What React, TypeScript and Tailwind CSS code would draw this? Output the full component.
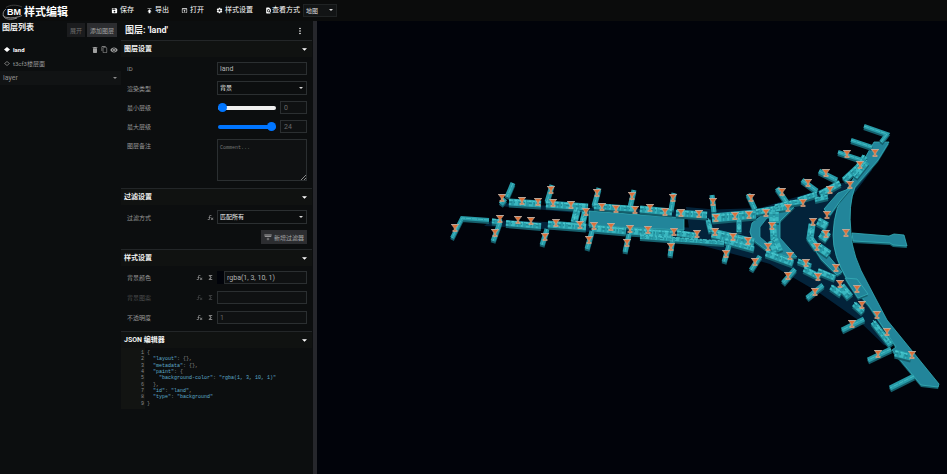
import type { ReactNode } from 'react';
import {
  MdContentCopy,
  MdDelete,
  MdFileDownload,
  MdFindInPage,
  MdFunctions,
  MdMoreVert,
  MdOpenInBrowser,
  MdSave,
  MdSettings,
  MdVisibility,
} from 'react-icons/md';

const inputClass =
  'block w-full min-w-0 rounded-none border border-[#2b2f31] bg-[#0f1112] px-[2px] text-[7px] text-[#b4b4b4] outline-none h-[13px]';

function Caret({ className = 'h-[3px] w-[5px]' }: { className?: string }) {
  return (
    <svg viewBox="0 0 6 3" className={className} fill="currentColor" aria-hidden="true">
      <path d="M0 0h6L3 3z" />
    </svg>
  );
}

function Select({ id, options }: { id: string; options: string[] }) {
  return (
    <div className="relative min-w-0 flex-1">
      <select
        id={id}
        className="block h-[14px] w-full appearance-none border border-[#2b2f31] bg-[#0c0e0f] px-[2px] text-[6px] leading-[12px] text-[#f0f0f0] outline-none"
      >
        {options.map((o) => (
          <option key={o}>{o}</option>
        ))}
      </select>
      <Caret className="pointer-events-none absolute top-[6px] right-[4px] h-[2px] w-[4px] text-[#d8d8d8]" />
    </div>
  );
}

function Section({ title, children }: { title: string; children: ReactNode }) {
  return (
    <section className="border-t border-[#232628]">
      <button type="button" className="flex h-4 w-full items-center justify-between bg-[#101211] pr-[5px] pl-[3px]">
        <span className="text-[7px] font-bold text-[#f2f2f2]">{title}</span>
        <Caret className="h-[3px] w-[5px] text-white" />
      </button>
      {children}
    </section>
  );
}

function Field({
  label,
  htmlFor,
  dim,
  tools,
  top,
  children,
}: {
  label: string;
  htmlFor: string;
  dim?: boolean;
  tools?: ReactNode;
  top?: boolean;
  children: ReactNode;
}) {
  return (
    <div className={`flex pr-[5px] pl-[6px] ${top ? 'items-start' : 'items-center'}`}>
      <label
        htmlFor={htmlFor}
        className={`flex-1 text-[6px] ${top ? 'leading-[13px]' : ''} ${dim ? 'text-[#4a4c4d]' : 'text-[#979797]'}`}
      >
        {label}
      </label>
      <div className={`flex gap-1 pr-[3px] ${dim ? 'text-[#4a4c4d]' : 'text-[#a8a8a8]'}`}>{tools}</div>
      <div className="flex w-[90px] items-center">{children}</div>
    </div>
  );
}

function FxButton() {
  return (
    <button type="button" aria-label="函数" className="flex items-center">
      <svg viewBox="0 0 24 24" className="size-[7px]" fill="currentColor" aria-hidden="true">
        <path d="M12.42 5.29c-1.1-.1-2.07.71-2.17 1.82L10 10h2.82v2h-3l-.44 5.07A4.001 4.001 0 0 1 2 18.83l1.5-1.5c.33 1.05 1.46 1.64 2.5 1.3.78-.24 1.33-.93 1.4-1.74L7.82 12h-3v-2H8l.27-3.07a4.01 4.01 0 0 1 4.33-3.65c1.26.11 2.4.81 3.06 1.89l-1.5 1.5c-.25-.77-.93-1.31-1.74-1.38M22 13.65l-1.41-1.41-2.83 2.83-2.83-2.83-1.43 1.41 2.85 2.85-2.85 2.81 1.43 1.41 2.83-2.83 2.83 2.83L22 19.31l-2.83-2.81z" />
      </svg>
    </button>
  );
}

function FieldTools() {
  return (
    <>
      <FxButton />
      <button type="button" aria-label="表达式" className="flex items-center">
        <MdFunctions size={7} />
      </button>
    </>
  );
}

function ZoomRange({ id, value, label }: { id: string; value: number; label: string }) {
  return (
    <>
      <input
        type="range"
        id={id}
        min={0}
        max={24}
        defaultValue={value}
        className={`ml-px h-1 w-[58px] appearance-none rounded-full [&::-webkit-slider-thumb]:size-[9px] [&::-webkit-slider-thumb]:appearance-none [&::-webkit-slider-thumb]:rounded-full [&::-webkit-slider-thumb]:bg-[#0075ff] ${
          value > 0 ? 'bg-[#0075ff]' : 'bg-[#efefef]'
        }`}
      />
      <input
        type="text"
        aria-label={label}
        placeholder={String(value)}
        className="ml-1 h-[13px] w-[27px] rounded-none border border-[#2b2f31] bg-[#0f1112] px-[3px] text-[7px] outline-none placeholder:text-[#6a6a6a]"
      />
    </>
  );
}

const headerActions = [
  { icon: <MdSave size={7} />, text: '保存' },
  { icon: <MdFileDownload size={7} className="rotate-180" />, text: '导出' },
  { icon: <MdOpenInBrowser size={7} />, text: '打开' },
  { icon: <MdSettings size={7} />, text: '样式设置' },
];

function Header() {
  return (
    <header className="flex h-[21px] shrink-0 items-center bg-[#0b0c0c] text-white">
      <div className="flex w-[111px] items-center pt-[3px]">
        <svg viewBox="0 0 24 18" className="h-[18px] w-[24px]" aria-hidden="true">
          <path d="M6 6C2 9 2 14 7 14.500C12 15.500 17 14.500 22 12.500M3 12C4 17 12 17 17 15" fill="none" stroke="#8f8f8f" strokeWidth="0.900" />
          <path d="M6 4.500C10 1.500 17 1.500 22 4" fill="none" stroke="#555" strokeWidth="0.700" />
          <text x="7" y="12" fontSize="9" fontWeight="700" fill="#fff" fontFamily="Liberation Sans, sans-serif">
            BM
          </text>
        </svg>
        <h1 className="text-[11px] leading-none font-bold">样式编辑</h1>
      </div>
      <nav className="flex gap-3">
        {headerActions.map((a) => (
          <button key={a.text} type="button" className="flex items-center gap-[2px] text-[7px] whitespace-nowrap">
            {a.icon}
            {a.text}
          </button>
        ))}
        <div className="flex items-center text-[7px]">
          <MdFindInPage size={7} />
          <label htmlFor="view-mode" className="whitespace-nowrap">
            查看方式
          </label>
          <div className="relative ml-[3px] w-[34px]">
            <select id="view-mode" className="block h-[13px] w-full appearance-none border border-[#202324] bg-[#121415] pl-[2px] text-[6px] text-[#dedede] outline-none">
              <option>地图</option>
            </select>
            <Caret className="pointer-events-none absolute top-[5px] right-[4px] h-[2px] w-[4px] text-[#d8d8d8]" />
          </div>
        </div>
      </nav>
    </header>
  );
}

function LayerList() {
  return (
    <aside className="w-[121px] shrink-0 bg-[#0c0e0f]">
      <div className="flex h-[18px] items-center gap-[2px] pr-1 pl-[2px]">
        <h2 className="flex-1 self-start pt-[2px] text-[8px] leading-[10px] font-bold text-[#f2f2f2]">图层列表</h2>
        <button type="button" className="h-[14px] w-[18px] bg-[#1b1c1e] text-[6px] text-[#6c6c6c]">
          展开
        </button>
        <button type="button" className="h-[14px] w-[30px] bg-[#2c2d30] text-[6px] text-[#a4a4a4]">
          添加图层
        </button>
      </div>
      <ul className="pt-[3px] text-[6px]">
        <li className="flex h-[14px] items-center gap-[3px] pr-[3px] pl-1 text-white">
          <svg viewBox="0 0 6 5" className="h-[5px] w-[6px]" fill="currentColor" aria-hidden="true">
            <path d="M3 0l3 2.500-3 2.500L0 2.500z" />
          </svg>
          <span className="flex-1 font-bold">land</span>
          <span className="flex items-center gap-[2px] pt-px text-[#a0a0a0]">
            <button type="button" aria-label="删除">
              <MdDelete size={8} />
            </button>
            <button type="button" aria-label="复制">
              <MdContentCopy size={7} />
            </button>
            <button type="button" aria-label="显示">
              <MdVisibility size={8} />
            </button>
          </span>
        </li>
        <li className="flex h-[15px] items-center gap-[3px] pl-1 text-[#979797]">
          <svg viewBox="0 0 6 5" className="h-[5px] w-[6px]" fill="none" stroke="currentColor" strokeWidth="0.700" aria-hidden="true">
            <path d="M3 .5l2.500 2-2.500 2L.5 2.500z" />
          </svg>
          <span>t3cf3楼层面</span>
        </li>
        <li>
          <button type="button" className="flex h-[14px] w-full items-center justify-between bg-[#111314] pr-1 pl-[3px] text-[7px] text-[#8e8e8e]">
            layer
            <Caret className="h-[2px] w-[4px]" />
          </button>
        </li>
      </ul>
    </aside>
  );
}

const jsonLines: [string, string, string][] = [
  ['{', '', ''],
  ['  ', '"layout"', ': {},'],
  ['  ', '"metadata"', ': {},'],
  ['  ', '"paint"', ': {'],
  ['    ', '"background-color"', ': "rgba(1, 3, 10, 1)"'],
  ['  },', '', ''],
  ['  ', '"id"', ': "land",'],
  ['  ', '"type"', ': "background"'],
  ['}', '', ''],
];

function JsonEditor() {
  return (
    <div className="grid h-[61px] auto-rows-fr bg-[linear-gradient(to_right,#121412_24px,transparent_24px)] pt-[2px] pb-[2px] font-['Liberation_Mono',monospace] text-[5px] leading-[6px]">
      {jsonLines.map(([lead, key, rest], i) => (
        <div key={i} className="flex">
          <span className="w-[23px] shrink-0 text-right text-[#8a8a8a]">{i + 1}</span>
          <code className="pl-[3px] font-['Liberation_Mono',monospace] whitespace-pre text-[#8a8a8a]">
            {lead}
            <span className="text-[#5faccb]">{key}</span>
            {rest.split(/("[^"]*")/).map((part, n) => (
              <span key={n} className={part.startsWith('"') ? 'text-[#5faccb]' : ''}>
                {part}
              </span>
            ))}
          </code>
        </div>
      ))}
    </div>
  );
}

function LayerEditor() {
  return (
    <main className="w-[192px] shrink-0 bg-[#0c0e0f] pr-px">
      <div className="flex h-[19px] items-center justify-between pr-[7px] pl-1">
        <h2 className="text-[9px] font-bold text-[#f2f2f2]">图层: 'land'</h2>
        <button type="button" aria-label="更多" className="text-white">
          <MdMoreVert size={10} />
        </button>
      </div>

      <Section title="图层设置">
        <div className="flex flex-col gap-[6px] pt-[5px] pb-[7px]">
          <Field label="ID" htmlFor="layer-id">
            <input id="layer-id" className={inputClass} defaultValue="land" />
          </Field>
          <Field label="渲染类型" htmlFor="layer-type">
            <Select id="layer-type" options={['背景']} />
          </Field>
          <Field label="最小层级" htmlFor="min-zoom">
            <ZoomRange id="min-zoom" value={0} label="最小层级数值" />
          </Field>
          <Field label="最大层级" htmlFor="max-zoom">
            <ZoomRange id="max-zoom" value={24} label="最大层级数值" />
          </Field>
          <Field label="图层备注" htmlFor="comment" top>
            <div className="relative w-full">
              <textarea
                id="comment"
                placeholder="Comment..."
                className="block h-[42px] w-full resize-none rounded-none border border-[#2b2f31] bg-[#0f1112] px-[2px] py-[5px] font-['Liberation_Mono',monospace] text-[5px] outline-none placeholder:text-[#777]"
              />
              <svg viewBox="0 0 5 5" className="pointer-events-none absolute right-px bottom-px size-[5px]" stroke="#c0c0c0" strokeWidth="0.700" aria-hidden="true">
                <path d="M0 5l5-5M3 5l2-2" />
              </svg>
            </div>
          </Field>
        </div>
      </Section>

      <Section title="过滤设置">
        <div className="flex flex-col gap-[6px] pt-[5px] pb-[5px]">
          <Field label="过滤方式" htmlFor="filter-mode" tools={<FxButton />}>
            <Select id="filter-mode" options={['匹配所有']} />
          </Field>
          <div className="flex justify-end pr-[5px]">
            <button type="button" className="flex h-[14px] w-[46px] items-center justify-center gap-[2px] bg-[#2c2d30] text-[6px] whitespace-nowrap text-[#a8a8a8]">
              <svg viewBox="0 0 24 24" className="size-[8px]" fill="currentColor" aria-hidden="true">
                <path d="M22 10a2 2 0 0 1-2 2H4a2 2 0 0 1-2-2V3h2v2h4V3h2v2h4V3h2v2h4V3h2zM4 10h4V7H4zm6 0h4V7h-4zm10 0V7h-4v3zm-9 4h2v3h3v2h-3v3h-2v-3H8v-2h3z" />
              </svg>
              新增过滤器
            </button>
          </div>
        </div>
      </Section>

      <Section title="样式设置">
        <div className="flex flex-col gap-[7px] pt-[5px] pb-[7px]">
          <Field label="背景颜色" htmlFor="bg-color" tools={<FieldTools />}>
            <span className="h-[13px] w-[7px] shrink-0 bg-[#01030a]" />
            <input id="bg-color" className={inputClass} defaultValue="rgba(1, 3, 10, 1)" />
          </Field>
          <Field label="背景图案" htmlFor="bg-pattern" dim tools={<FieldTools />}>
            <input id="bg-pattern" className={inputClass} />
          </Field>
          <Field label="不透明度" htmlFor="bg-opacity" tools={<FieldTools />}>
            <input id="bg-opacity" className={`${inputClass} placeholder:text-[#6a6a6a]`} placeholder="1" />
          </Field>
        </div>
      </Section>

      <Section title="JSON 编辑器">
        <JsonEditor />
      </Section>
    </main>
  );
}

// Ground slabs under the building parts
const floors = [
  'M500 203L590 208L700 210L760 208L852 180L866 160L872 170L838 215L838 255L868 300L892 347L884 345L858 320L818 292L770 264L700 245L640 236L590 232L560 230L484 226L492 220L700 228L700 220L590 214L500 206Z',
  'M686 207L742 212L764 221L764 246L740 243L690 236Z',
  'M777 232L781 214L812 202L838 194L822 209L808 224L806 240L814 250L842 280L835 277L802 262Z',
];

// Rows of rooms along the piers, with the width of each row
const rooms: [string, number][] = [
  ['M501 200L505 203', 7],
  ['M509 202L541 204', 7],
  ['M546 204L588 207', 7],
  ['M594 206L636 209', 6],
  ['M640 209L672 212', 7],
  ['M676 213L707 215', 7],
  ['M712 218L756 214', 9],
  ['M492 221L502 222', 5],
  ['M506 223L541 226', 6],
  ['M548 224L586 227', 7],
  ['M592 228L626 231', 7],
  ['M629 231L673 234', 7],
  ['M677 233L698 236', 6],
  ['M640 237L724 243', 4],
  ['M712 233L754 243', 9],
  ['M577 210L574 222', 7],
  ['M585 212L582 224', 6],
  ['M708 220L711 232', 5],
  ['M739 220L739 232', 5],
  ['M725 241L754 249', 5],
  ['M756 212L786 207', 6],
  ['M775 207L791 203L804 201', 5],
  ['M798 200L817 194', 5],
  ['M815 200L828 197', 4],
  ['M820 194L840 183', 6],
  ['M844 180L858 167L865 156', 6],
  ['M855 177L867 162', 6],
  ['M774 212L774 223', 10],
  ['M773 240L778 252', 11],
  ['M773 224L774 240', 7],
  ['M766 253L793 263', 7],
  ['M798 261L811 266', 5],
  ['M804 269L820 277', 6],
  ['M818 271L835 278', 6],
  ['M831 287L841 294', 6],
  ['M841 286L850 297', 8],
  ['M854 304L863 312', 6],
  ['M873 322L891 345', 6],
  ['M812 224L810 238L817 248', 7],
  ['M818 221L827 226', 8],
  ['M821 233L828 238', 10],
  ['M819 247L829 254', 8],
  ['M895 353L911 357', 7],
];

// Boarding bridges
const bridges: [string, number][] = [
  ['M513 183L507 197', 5],
  ['M552 185L547 202', 5],
  ['M599 188L594 206', 5],
  ['M634 190L630 207', 5],
  ['M674 193L671 210', 5],
  ['M712 195L714 212', 5],
  ['M748 194L755 209', 5],
  ['M777 188L788 204', 5],
  ['M802 180L817 191', 5],
  ['M819 171L837 180', 5],
  ['M838 152L862 160', 4],
  ['M851 140L872 147', 4],
  ['M864 126L887 134L881 142', 4],
  ['M489 220L462 218L452 238', 4],
  ['M500 222L493 241', 5],
  ['M547 229L542 245', 5],
  ['M592 231L587 249', 5],
  ['M629 234L625 252', 5],
  ['M673 237L670 256', 5],
  ['M729 245L724 262', 5],
  ['M760 256L751 270', 5],
  ['M795 269L783 283', 5],
  ['M823 285L807 298', 5],
  ['M864 319L842 330', 5],
  ['M891 349L868 360', 5],
  ['M914 376L890 388', 5],
];

const slabs = [
  'M589 211L684 218L684 230L589 226Z',
  'M874 142L889 142L878 160L855 187Q848 205 851 233Q852 256 868 284L887 320L939 384L938 387L921 385L892 350L896 347L869 306L847 279Q833 256 833 235Q834 205 848 188Z',
  'M852 233L889 236L894 234L904 235L907 246L893 245L890 243L853 241Z',
  'M766 212L788 206L795 206L780 221L780 238L797 257L788 257L765 249L753 240L750 232L752 223Z',
  'M845 278L857 279L868 294L858 298Z',
  'M824 209L838 193L851 188L840 201L830 215Z',
  'M809 240L818 246L827 254L842 272L837 275L821 259Z',
];

const gates: [number, number][] = [
  [502, 198], [522, 201], [538, 202], [553, 203], [571, 205], [551, 190], [597, 193], [602, 207], [586, 212],
  [500, 219], [518, 220], [531, 221], [556, 223], [580, 225], [594, 226], [455, 228], [495, 233], [545, 237],
  [589, 240], [616, 209], [635, 210], [650, 208], [665, 212], [681, 213], [699, 214], [716, 218], [735, 216],
  [749, 215], [632, 196], [673, 198], [713, 202], [751, 198], [611, 227], [630, 229], [648, 230], [674, 232],
  [697, 234], [715, 232], [733, 237], [748, 241], [627, 243], [671, 247], [726, 254], [755, 262], [875, 153],
  [847, 154], [860, 165], [826, 173], [808, 183], [850, 185], [830, 190], [782, 192], [803, 203], [788, 208],
  [766, 213], [827, 215], [813, 222], [772, 226], [826, 234], [846, 233], [817, 247], [768, 247], [790, 256],
  [806, 263], [788, 276], [818, 277], [836, 268], [815, 292], [840, 284], [857, 289], [862, 305], [852, 324],
  [877, 315], [887, 332], [878, 354], [912, 355],
];

function TerminalMap() {
  const walls = [...rooms, ...bridges];
  return (
    <svg viewBox="317 21 630 453" className="h-full w-full" role="img" aria-label="地图">
      {floors.map((d) => (
        <path key={d} d={d} fill="#03233a" />
      ))}
      {slabs.map((d) => (
        <g key={d} strokeLinejoin="round">
          <path d={d} fill="#14616f" transform="translate(0 2)" />
          <path d={d} fill="#22859a" stroke="#35adb8" strokeWidth="0.800" />
        </g>
      ))}
      <path d="M760 227L767 218L773 218L773 243L767 243L760 237Z" fill="#03243b" stroke="#35adb8" strokeWidth="0.700" />
      <g fill="none">
        {walls.map(([d, w], i) => (
          <path key={i} d={d} stroke="#155f6c" strokeWidth={w} transform="translate(0 2)" />
        ))}
        {walls.map(([d, w], i) => (
          <path key={i} d={d} stroke="#279ba8" strokeWidth={w} />
        ))}
        {rooms.map(([d, w], i) => (
          <g key={i}>
            <path d={d} stroke="#43c3cb" strokeWidth={w - 1} strokeDasharray="2 3 4 2 1 3" strokeOpacity="0.700" />
            <path d={d} stroke="#1f8794" strokeWidth={w / 4} strokeDasharray="3 2 1 4" />
            <path d={d} stroke="#52d2d8" strokeWidth="0.800" strokeDasharray="4 2 2 1" transform="translate(0 -2)" />
          </g>
        ))}
        {bridges.map(([d], i) => (
          <path key={i} d={d} stroke="#45bac2" strokeWidth="1" strokeDasharray="5 1" />
        ))}
      </g>
      {gates.map(([x, y], i) => (
        <g key={i} transform={`translate(${x} ${y})`}>
          <path d="M-3.500-3.500H3.500L.8 0V2.500H2.200V3.500H-2.200V2.500H-.8V0z" fill="#dd7038" stroke="#cfa98f" strokeWidth="0.700" />
          <path d="M-3.800-3.500H3.800" stroke="#b9a99d" strokeWidth="0.900" />
        </g>
      ))}
    </svg>
  );
}

export default function App() {
  return (
    <div className="flex min-h-screen flex-col bg-[#01030a] font-[Roboto,'Noto_Sans_CJK_SC',sans-serif]">
      <Header />
      <div className="flex flex-1">
        <LayerList />
        <LayerEditor />
        <div className="w-1 shrink-0 bg-[#26272c]" />
        <div className="min-w-0 flex-1">
          <TerminalMap />
        </div>
      </div>
    </div>
  );
}
